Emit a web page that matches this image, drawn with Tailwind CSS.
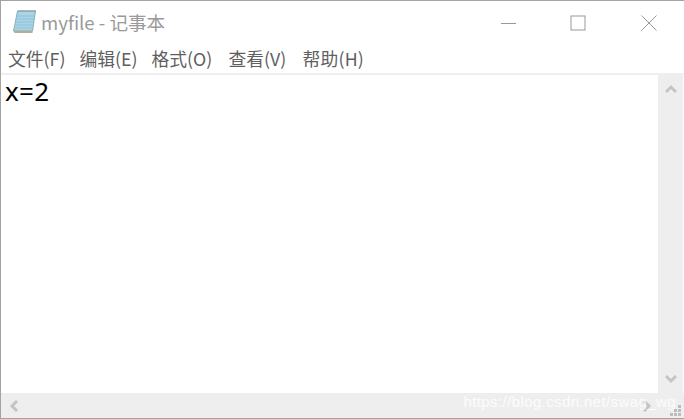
<!DOCTYPE html>
<html lang="zh">
  <head>
    <meta charset="UTF-8" />
    <title>myfile - 记事本</title>
    <script src="https://cdn.jsdelivr.net/npm/@tailwindcss/browser@4"></script>
  </head>
  <body class="bg-white overflow-hidden">
    <div class="relative w-[684px] h-[419px] flex flex-col border-t border-l border-b border-[#a3a3a3] font-['Noto_Sans_CJK_SC','Liberation_Sans',sans-serif]">
      <!-- title bar -->
      <div class="flex items-center h-[43px] shrink-0 pl-[11px]">
        <svg class="w-[25px] h-[26px] mt-[-3px]" viewBox="0 0 24 26">
          <path d="M5 3h18l-3 20H1z" fill="#a9d5e6" stroke="#7d9aa6" stroke-width="0.8" />
          <path d="M5 8h17M4 11h18M4 14h17M3 17h17M3 20h17" stroke="#8cc0d4" stroke-width="1" />
          <path d="M1 23h19l0 2H2z" fill="#b8ad92" />
          <path d="M6 3h17" stroke="#8a9aa0" stroke-width="2" stroke-dasharray="1 1" />
        </svg>
        <span class="ml-[4px] text-[18.6px] leading-none text-[#9a9a9a]">myfile - 记事本</span>
        <div class="ml-auto flex items-center">
          <svg class="w-[16px] h-[16px]" viewBox="0 0 16 16"><path d="M0 8.5h15" stroke="#999" /></svg>
          <svg class="w-[16px] h-[16px] ml-[53px]" viewBox="0 0 16 16"><rect x="1" y="1" width="14" height="14" fill="none" stroke="#999" /></svg>
          <svg class="w-[16px] h-[16px] ml-[55px] mr-[27px]" viewBox="0 0 16 16"><path d="M0.5 0.5l15 15M15.5 0.5l-15 15" stroke="#999" /></svg>
        </div>
      </div>
      <!-- menu -->
      <div class="flex items-center gap-[14px] h-[29px] shrink-0 pl-[7px] text-[17.8px] leading-none text-[#5f5f5f]">
        <span>文件(F)</span>
        <span>编辑(E)</span>
        <span class="w-[63px]">格式(O)</span>
        <span class="w-[60px]">查看(V)</span>
        <span class="tracking-[0.2px]">帮助(H)</span>
      </div>
      <div class="h-[2px] shrink-0 bg-[#efefef]"></div>
      <!-- editor -->
      <div class="flex flex-1 min-h-0">
        <div class="flex-1 pl-[4px] pt-[1px] text-[26px] leading-[30px] tracking-[0.3px] text-black font-['Noto_Sans',sans-serif]">x=2</div>
        <div class="w-[25px] mr-[1px] bg-[#eeeeee] flex flex-col items-center justify-between py-[9px]">
          <svg class="w-[12px] h-[10px]" viewBox="0 0 12 10"><path d="M1 8l5-5 5 5" fill="none" stroke="#c4c4c4" stroke-width="3" /></svg>
          <svg class="w-[12px] h-[10px]" viewBox="0 0 12 10"><path d="M1 2l5 5 5-5" fill="none" stroke="#c4c4c4" stroke-width="3" /></svg>
        </div>
      </div>
      <!-- bottom scrollbar -->
      <div class="h-[25px] shrink-0 bg-[#eeeeee] flex items-center justify-between pl-[8px] pr-[32px]">
        <svg class="w-[10px] h-[12px]" viewBox="0 0 10 12"><path d="M8 1L3 6l5 5" fill="none" stroke="#c4c4c4" stroke-width="3" /></svg>
        <svg class="w-[10px] h-[12px]" viewBox="0 0 10 12"><path d="M2 1l5 5-5 5" fill="none" stroke="#c4c4c4" stroke-width="3" /></svg>
      </div>
      <!-- grip -->
      <div class="absolute right-[3px] bottom-[2px] grid grid-cols-3 gap-[1px]">
        <span></span><span></span><span class="w-[3px] h-[3px] bg-[#bdbdbd]"></span>
        <span></span><span class="w-[3px] h-[3px] bg-[#bdbdbd]"></span><span class="w-[3px] h-[3px] bg-[#bdbdbd]"></span>
        <span class="w-[3px] h-[3px] bg-[#bdbdbd]"></span><span class="w-[3px] h-[3px] bg-[#bdbdbd]"></span><span class="w-[3px] h-[3px] bg-[#bdbdbd]"></span>
      </div>
      <!-- watermark -->
      <span class="absolute right-[8px] bottom-[9px] text-[15px] leading-none text-white/80 font-['Liberation_Sans',sans-serif] tracking-[0.4px]">https://blog.csdn.net/swag_wg</span>
    </div>
  </body>
</html>
